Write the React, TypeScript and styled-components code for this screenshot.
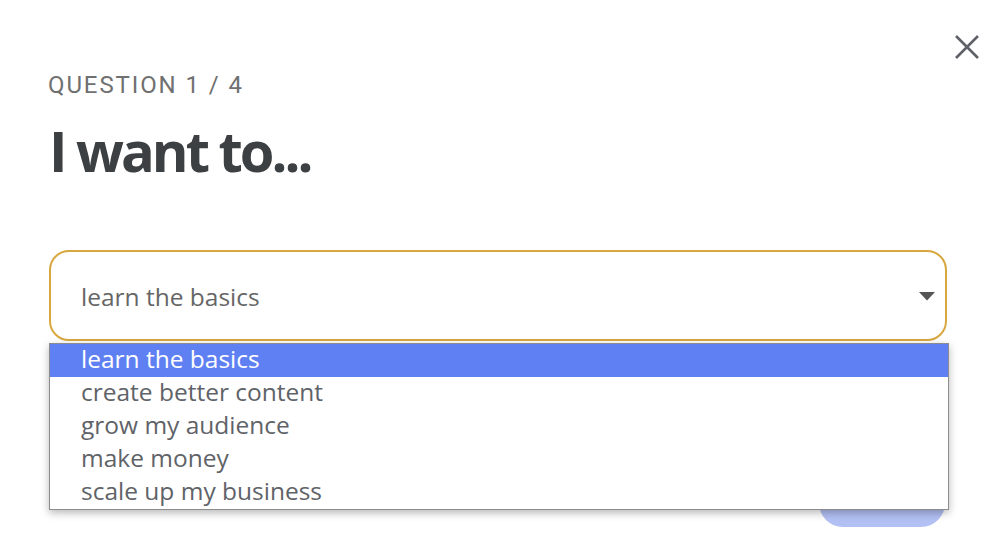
import React, { useState } from "react";
import styled, { createGlobalStyle } from "styled-components";

const OPTIONS = [
  "learn the basics",
  "create better content",
  "grow my audience",
  "make money",
  "scale up my business",
];

const GlobalStyle = createGlobalStyle`
  html, body {
    margin: 0;
    padding: 0;
    background: #ffffff;
  }
  * {
    box-sizing: border-box;
  }
`;

const Dialog = styled.div`
  position: relative;
  width: 1000px;
  height: 554px;
  padding: 71px 53px 0 49px;
  background: #ffffff;
  overflow: hidden;
`;

const CloseButton = styled.button`
  position: absolute;
  top: 33px;
  right: 19px;
  width: 28px;
  height: 28px;
  padding: 0;
  border: none;
  background: none;
  cursor: pointer;
  display: flex;
  align-items: center;
  justify-content: center;
`;

const Step = styled.div`
  font-family: Roboto, "Liberation Sans", sans-serif;
  font-size: 24px;
  line-height: 28px;
  letter-spacing: 1.9px;
  color: #707070;
  margin-left: -1px;
`;

const Title = styled.h1`
  margin: 19px 0 0 0;
  font-family: "Open Sans", "Noto Sans", sans-serif;
  font-weight: 700;
  font-size: 56px;
  line-height: 64px;
  letter-spacing: -3px;
  color: #3c4043;
`;

const SelectWrap = styled.div`
  position: relative;
  margin-top: 68px;
`;

const SelectBox = styled.button`
  width: 100%;
  height: 91px;
  display: flex;
  align-items: center;
  justify-content: space-between;
  padding: 1px 10px 0 30px;
  border: 2px solid #d8a83e;
  border-radius: 20px;
  background: #ffffff;
  font-family: "Open Sans", "Noto Sans", sans-serif;
  font-size: 24.5px;
  color: #666666;
  text-align: left;
  cursor: pointer;
`;

const OptionList = styled.ul`
  position: absolute;
  top: 93px;
  left: 0;
  width: 900px;
  margin: 0;
  padding: 0;
  list-style: none;
  background: #ffffff;
  border: 1px solid #8c8c8c;
  box-shadow: 0 3px 8px rgba(0, 0, 0, 0.28);
  z-index: 2;
`;

const OptionItem = styled.li<{ $active: boolean }>`
  height: 33px;
  padding: 1px 0 4px 31px;
  font-family: "Open Sans", "Noto Sans", sans-serif;
  font-size: 24.5px;
  line-height: 28px;
  color: ${(p) => (p.$active ? "#ffffff" : "#5f6368")};
  background: ${(p) => (p.$active ? "#5f80f2" : "transparent")};
  cursor: default;
  white-space: nowrap;
`;

const Footer = styled.div`
  display: flex;
  justify-content: flex-end;
  margin-top: 130px;
  padding-right: 2px;
`;

const NextButton = styled.button`
  width: 126px;
  height: 56px;
  border: none;
  border-radius: 24px;
  background: #b3c0f4;
  font-family: "Open Sans", "Noto Sans", sans-serif;
  font-size: 16px;
  line-height: 20px;
  padding: 0 0 14px 0;
  color: #ffffff;
`;

const Caret = () => (
  <svg width="16" height="9" viewBox="0 0 16 9">
    <path d="M0 0 L16 0 L8 8.5 Z" fill="#555555" />
  </svg>
);

const CloseIcon = () => (
  <svg width="26" height="26" viewBox="0 0 26 26">
    <path
      d="M2 2 L24 24 M24 2 L2 24"
      stroke="#5f6368"
      strokeWidth="2.6"
      strokeLinecap="butt"
    />
  </svg>
);

export default function App() {
  const [value, setValue] = useState(OPTIONS[0]);
  const [open, setOpen] = useState(true);

  return (
    <>
      <GlobalStyle />
      <Dialog>
        <CloseButton aria-label="Close">
          <CloseIcon />
        </CloseButton>
        <Step>QUESTION 1 / 4</Step>
        <Title>I want to...</Title>
        <SelectWrap>
          <SelectBox onClick={() => setOpen(!open)}>
            <span>{value}</span>
            <Caret />
          </SelectBox>
          {open && (
            <OptionList>
              {OPTIONS.map((opt) => (
                <OptionItem
                  key={opt}
                  $active={opt === value}
                  onClick={() => {
                    setValue(opt);
                    setOpen(false);
                  }}
                >
                  {opt}
                </OptionItem>
              ))}
            </OptionList>
          )}
        </SelectWrap>
        <Footer>
          <NextButton disabled>Next</NextButton>
        </Footer>
      </Dialog>
    </>
  );
}
